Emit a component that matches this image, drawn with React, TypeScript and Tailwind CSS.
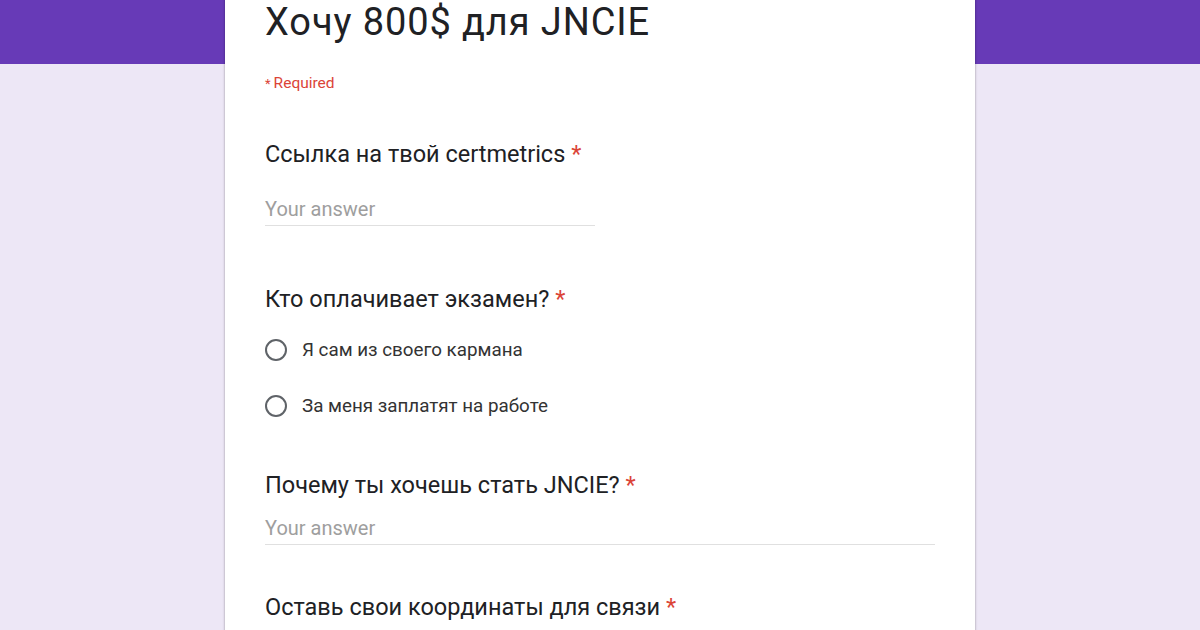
export default function App() {
  return (
    <div
      className="relative h-[630px] w-[1200px] overflow-hidden bg-[#ede7f6]"
      style={{ fontFamily: "Roboto, 'Liberation Sans', sans-serif" }}
    >
      <div className="h-16 w-full bg-[#673ab7]" />
      <div className="absolute left-[225px] top-[-20px] h-[700px] w-[750px] bg-white px-10 shadow-[0_0_2px_rgba(0,0,0,0.25),0_1px_3px_rgba(0,0,0,0.15)]">
        <h1 className="mt-[18px] text-[38px] leading-[48px] tracking-[0.9px] text-[#202124]">Хочу 800$ для JNCIE</h1>
        <div className="mt-[29px] text-[15.5px] leading-4 text-[#db4437]">
          <span className="mr-[3px] text-[13px]">*</span>Required
        </div>

        <Question title="Ссылка на твой certmetrics" className="mt-[48px]" />
        <div className="mt-[29px] w-[330px]">
          <Answer />
        </div>

        <Question title="Кто оплачивает экзамен?" className="mt-[59px]" />
        <div className="mt-[25px] flex flex-col gap-[32px]">
          <Radio label="Я сам из своего кармана" />
          <Radio label="За меня заплатят на работе" />
        </div>

        <Question title="Почему ты хочешь стать JNCIE?" className="mt-[53px]" />
        <div className="mt-[17px]">
          <Answer />
        </div>

        <Question title="Оставь свои координаты для связи" className="mt-[48px]" />
      </div>
    </div>
  )
}

function Question({ title, className }: { title: string; className?: string }) {
  return (
    <div className={`text-[23.5px] leading-7 text-[#202124] ${className ?? ""}`}>
      {title} <span className="text-[#db4437]">*</span>
    </div>
  )
}

function Answer() {
  return (
    <div className="border-b border-[#e0e0e0] pb-[4px] text-[20px] leading-6 text-[#9e9e9e]">
      Your answer
    </div>
  )
}

function Radio({ label }: { label: string }) {
  return (
    <div className="flex items-center gap-[15px]">
      <div className="h-[22px] w-[22px] rounded-full border-2 border-[#5f6368]" />
      <span className="text-[18.8px] leading-6 text-[#333]">{label}</span>
    </div>
  )
}
